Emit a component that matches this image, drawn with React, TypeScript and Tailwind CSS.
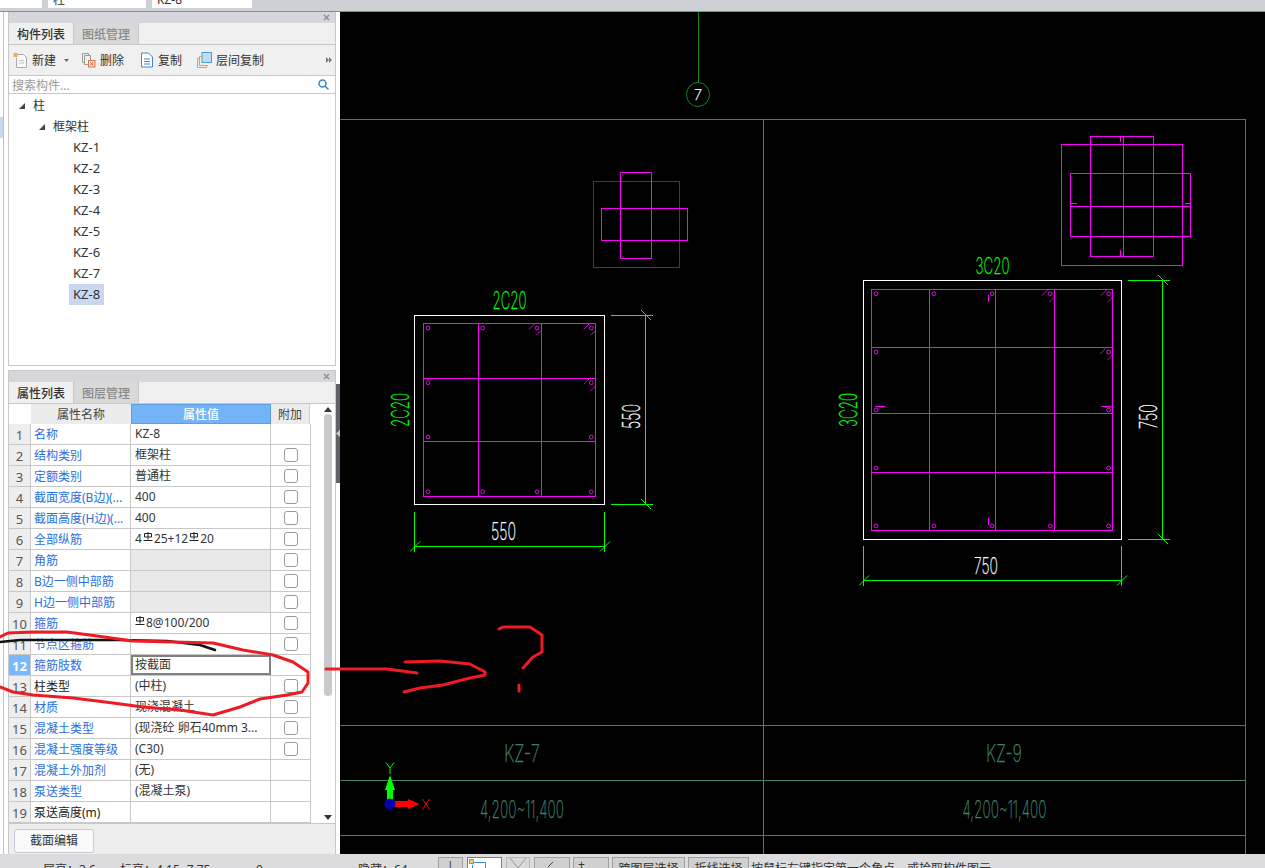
const font = { fontFamily: '"Noto Sans", "Noto Sans CJK SC", sans-serif' };

const treeItems = ["KZ-1", "KZ-2", "KZ-3", "KZ-4", "KZ-5", "KZ-6", "KZ-7", "KZ-8"];

type Row = {
  name: string;
  value?: string;
  black?: boolean;
  gray?: boolean;
  check?: boolean;
  steel?: "all" | "stirrup";
};

const rows: Row[] = [
  { name: "名称", value: "KZ-8" },
  { name: "结构类别", value: "框架柱", check: true },
  { name: "定额类别", value: "普通柱", check: true },
  { name: "截面宽度(B边)(...", value: "400", check: true },
  { name: "截面高度(H边)(...", value: "400", check: true },
  { name: "全部纵筋", steel: "all", check: true },
  { name: "角筋", gray: true, check: true },
  { name: "B边一侧中部筋", gray: true, check: true },
  { name: "H边一侧中部筋", gray: true, check: true },
  { name: "箍筋", steel: "stirrup", check: true },
  { name: "节点区箍筋", check: true },
  { name: "箍筋肢数", value: "按截面" },
  { name: "柱类型", value: "(中柱)", black: true, check: true },
  { name: "材质", value: "现浇混凝土", check: true },
  { name: "混凝土类型", value: "(现浇砼 卵石40mm 3...", check: true },
  { name: "混凝土强度等级", value: "(C30)", check: true },
  { name: "混凝土外加剂", value: "(无)" },
  { name: "泵送类型", value: "(混凝土泵)" },
  { name: "泵送高度(m)", black: true },
];

function SteelMark() {
  return (
    <svg width="10" height="10" viewBox="0 0 10 10" className="mb-[4px] shrink-0" fill="none" stroke="#222" strokeWidth="1">
      <path d="M1.5 1.5H8.5V5H1.5ZM5 0V7.5M0.5 8.5H9.5" />
    </svg>
  );
}

function PanelHeader({ tabs }: { tabs: string[] }) {
  return (
    <>
      <div className="flex h-[11px] items-center justify-end bg-[#d6d6db] pr-[5px]">
        <svg width="7" height="7" viewBox="0 0 7 7" stroke="#8f8f94" strokeWidth="1.5">
          <path d="M1 1L6 6M6 1L1 6" />
        </svg>
      </div>
      <div className="flex h-[22px] border-b border-[#c8c8c8] bg-[#f0f0f0] text-xs leading-[23px]">
        <div className="w-[65px] border-r border-[#c8c8c8] text-center font-medium text-[#333]">{tabs[0]}</div>
        <div className="w-[65px] border-r border-[#c8c8c8] bg-[#d9d9d9] text-center font-medium text-[#8a8a8a]">{tabs[1]}</div>
      </div>
    </>
  );
}

function Toolbar() {
  return (
    <div className="flex h-[31px] items-center border-b border-[#c8c8c8] bg-[#f0f0f0] pl-[4px] pr-[3px] text-xs text-[#333]">
      <svg width="15" height="17" viewBox="0 0 15 17" fill="none" className="mr-[4px]">
        <path d="M4.5 2.5H10.5L13.5 5.5V15.5H3.5V6" stroke="#a8a8a8" fill="#fafafa" />
        <path d="M6 8.5H11M6 11H11" stroke="#c4c4c4" />
        <rect x="0.5" y="1" width="4" height="4" fill="#f2a94e" />
      </svg>
      <span className="pt-[2px]">新建</span>
      <svg width="5" height="3" viewBox="0 0 5 3" className="ml-[8px] mr-[12px]">
        <path d="M0 0H5L2.5 3Z" fill="#666" />
      </svg>
      <svg width="15" height="16" viewBox="0 0 15 16" fill="none" className="mr-[4px]">
        <path d="M1.5 1.5H7.5V3M1.5 1.5V10.5H3" stroke="#9a9a9a" />
        <path d="M3.5 3.5H9.5V8M3.5 3.5V12.5H7" stroke="#9a9a9a" />
        <rect x="7.5" y="8.5" width="6.5" height="6.5" fill="#f6e3d6" stroke="#d0764a" />
        <path d="M9.2 10.2L12.3 13.3M12.3 10.2L9.2 13.3" stroke="#c9552a" />
      </svg>
      <span className="pt-[2px]">删除</span>
      <svg width="14" height="16" viewBox="0 0 14 16" fill="none" className="ml-[16px] mr-[4px]">
        <path d="M1.5 1H8.5L12.5 5V15H1.5Z" fill="#fff" stroke="#3a8ad6" />
        <path d="M4 7H10M4 9.5H10M4 12H10" stroke="#3a8ad6" />
      </svg>
      <span className="pt-[2px]">复制</span>
      <svg width="15" height="16" viewBox="0 0 15 16" fill="none" className="ml-[15px] mr-[4px]">
        <path d="M0.5 15.5V6.5H2.5M0.5 15.5H9.5V13.5" stroke="#e09a55" />
        <path d="M2.5 13.5V4.5H4.5M2.5 13.5H11" stroke="#e09a55" />
        <rect x="5" y="0.5" width="9.5" height="10" fill="#b9def6" stroke="#4d9ed6" />
      </svg>
      <span className="pt-[2px]">层间复制</span>
      <svg width="6" height="6" viewBox="0 0 6 6" className="ml-auto" fill="#777">
        <path d="M0 0L3 3L0 6ZM3 0L6 3L3 6Z" />
      </svg>
    </div>
  );
}

function ComponentPanel() {
  return (
    <section className="flex h-[354px] flex-col border-x border-b border-[#c8c8c8]">
      <PanelHeader tabs={["构件列表", "图纸管理"]} />
      <Toolbar />
      <div className="flex h-[18px] items-center justify-between border-b border-[#c8c8c8] bg-white pl-[3px] pr-[6px] text-xs text-[#9a9a9a]">
        <span className="pt-[2px]">搜索构件...</span>
        <svg width="11" height="11" viewBox="0 0 11 11" fill="none" stroke="#3a86c8" strokeWidth="1.5">
          <circle cx="4.5" cy="4.5" r="3.5" />
          <path d="M7 7L10.5 10.5" />
        </svg>
      </div>
      <div className="flex-1 bg-white pt-[1px] text-xs text-[#333]">
        <div className="flex h-[21px] items-center pl-[10px]">
          <svg width="6" height="6" viewBox="0 0 6 6" className="mr-[8px]"><path d="M6 0V6H0Z" fill="#444" /></svg>
          <span>柱</span>
        </div>
        <div className="flex h-[21px] items-center pl-[30px]">
          <svg width="6" height="6" viewBox="0 0 6 6" className="mr-[8px]"><path d="M6 0V6H0Z" fill="#444" /></svg>
          <span>框架柱</span>
        </div>
        {treeItems.map((item) => (
          <div key={item} className="flex h-[21px] items-center pl-[60px]">
            <span className={`px-[4px] text-[13px] leading-[21px] ${item === "KZ-8" ? "bg-[#c9d8f0]" : ""}`}>{item}</span>
          </div>
        ))}
      </div>
    </section>
  );
}

function PropertyPanel() {
  return (
    <section className="flex h-[484px] flex-col border-x border-t border-[#c8c8c8]">
      <PanelHeader tabs={["属性列表", "图层管理"]} />
      <div className="flex h-[419px] bg-white text-xs">
        <div className="w-[313px]">
          <div className="flex h-[20px] pr-[11px] text-[#444]">
            <div className="w-[22px] bg-white" />
            <div className="w-[100px] bg-[#ececec] text-center leading-[22px]">属性名称</div>
            <div className="w-[140px] border border-[#5a9fe6] bg-[#74b3f5] text-center font-medium leading-[20px] text-white">属性值</div>
            <div className="w-[39px] border-r border-[#d0d0d0] bg-[#ececec] text-center leading-[22px]">附加</div>
            <div className="flex-1 bg-[#ececec]" />
          </div>
          {rows.map((row, i) => {
            const active = i === 11;
            return (
              <div key={row.name} className="flex h-[21px] w-[302px] border-b border-[#c8c8c8] leading-[22px]">
                <div className={`w-[22px] shrink-0 border-r border-[#c8c8c8] text-center text-[13px] ${active ? "bg-[#7ab8fb] font-bold text-white" : "bg-[#eeeeee] text-[#555]"}`}>
                  {i + 1}
                </div>
                <div className={`w-[100px] shrink-0 overflow-hidden whitespace-nowrap border-r border-[#c8c8c8] pl-[3px] ${row.black ? "text-[#222]" : "text-[#2a6fdc]"}`}>
                  {row.name}
                </div>
                <div className={`flex w-[140px] shrink-0 items-center gap-[1px] whitespace-nowrap text-[#333] ${active ? "border-2 border-[#808080] pl-[2px]" : "border-r border-[#c8c8c8] pl-[4px]"} ${row.gray ? "bg-[#e9e9e9]" : ""}`}>
                  {row.steel === "all" && (
                    <>
                      4<SteelMark />25+12<SteelMark />20
                    </>
                  )}
                  {row.steel === "stirrup" && (
                    <>
                      <SteelMark />8@100/200
                    </>
                  )}
                  {row.value}
                </div>
                <div className="flex w-[40px] shrink-0 items-center justify-center border-r border-[#c8c8c8]">
                  {row.check && <div className="h-[14px] w-[14px] rounded-[3px] border border-[#9a9a9a] bg-white" />}
                </div>
              </div>
            );
          })}
        </div>
        <div className="flex w-[14px] flex-col items-center justify-between pb-[3px] pt-[3px]">
          <svg width="8" height="5" viewBox="0 0 8 5"><path d="M4 0L8 5H0Z" fill="#333" /></svg>
          <div className="h-[282px] w-[8px] rounded-full bg-[#c9c9c9]" />
          <div className="h-[115px]" />
          <svg width="8" height="5" viewBox="0 0 8 5"><path d="M0 0H8L4 5Z" fill="#333" /></svg>
        </div>
      </div>
      <div className="flex-1 border-t border-[#c8c8c8] bg-[#eeeeee] pl-[5px] pt-[3px]">
        <button className="h-[24px] w-[80px] rounded-[3px] border border-[#c5cbd8] bg-[#fafafa] text-xs text-[#333]">截面编辑</button>
      </div>
    </section>
  );
}

type CadTextProps = {
  x: number;
  y: number;
  w: number;
  h: number;
  color: string;
  rotate?: boolean;
  children: string;
};

// CAD lettering: narrow, thin, sits on a baseline at x/y
function CadText({ x, y, w, h, color, rotate, children }: CadTextProps) {
  return (
    <text
      x={x}
      y={y}
      fontFamily="Inter, sans-serif"
      fontWeight="200"
      fontSize={h / 0.727}
      textLength={w}
      lengthAdjust="spacingAndGlyphs"
      fill={color}
      stroke={color}
      strokeWidth="0.25"
      transform={rotate ? `rotate(-90 ${x} ${y})` : undefined}
    >
      {children}
    </text>
  );
}

function Rebar({ points }: { points: number[][] }) {
  return (
    <>
      {points.map(([x, y]) => (
        <circle key={`${x}-${y}`} cx={x} cy={y} r="1.9" fill="none" stroke="#ff00ff" strokeWidth="0.9" />
      ))}
    </>
  );
}

function Tick({ x, y }: { x: number; y: number }) {
  return <path d={`M${x - 5} ${y - 5}L${x + 5} ${y + 5}`} stroke="#00ff00" strokeWidth="1" />;
}

function Drawing() {
  const teal = "#3f8068";
  const pink = "#ff00ff";
  const lime = "#00ff00";
  return (
    <svg width="925" height="842" viewBox="340 12 925 842" className="block" fill="none">
      <g stroke={teal} shapeRendering="crispEdges">
        <path d="M340 119.5H1245.5V854M763.5 119.5V854M340 725.5H1245.5M340 780.5H1245.5M340 835.5H1245.5" />
      </g>
      <path d="M698.5 12V83" stroke="#0d8a1e" shapeRendering="crispEdges" />
      <ellipse cx="698" cy="94.5" rx="11.5" ry="12" stroke="#0d8a1e" />
      <CadText x={694} y={100} w={8} h={11} color="#ffffff">7</CadText>

      {/* small section, left */}
      <g stroke={pink} shapeRendering="crispEdges">
        <rect x="593.5" y="181.5" width="86" height="86" strokeOpacity="0.6" />
        <rect x="620.5" y="172.5" width="31" height="86" />
        <rect x="601.5" y="208.5" width="86" height="32" />
      </g>

      {/* small section, right */}
      <g stroke={pink} shapeRendering="crispEdges">
        <rect x="1061.5" y="144.5" width="121" height="121" />
        <rect x="1090.5" y="136.5" width="63" height="120" />
        <rect x="1070.5" y="173.5" width="120" height="63" />
        <path d="M1123.5 136V256M1070 206.5H1190M1120.5 137V142M1120.5 250V256M1071 203.5H1077M1185 203.5H1190" />
      </g>

      {/* KZ-7 section */}
      <rect x="414.5" y="315.5" width="190" height="189" stroke="#ffffff" strokeWidth="1.2" shapeRendering="crispEdges" />
      <g stroke={pink} shapeRendering="crispEdges">
        <rect x="423.5" y="323.5" width="172" height="173" />
        <path d="M478.5 323V496M541.5 323V496M423 378.5H596M423 441.5H596" />
      </g>
      <Rebar
        points={[
          [428, 328], [482.7, 328], [537, 328], [591.3, 328],
          [428, 382.7], [591.3, 382.7],
          [428, 437], [591.3, 437],
          [428, 491.7], [482.7, 491.7], [537, 491.7], [591.3, 491.7],
        ]}
      />
      <path d="M529 329.5L534.5 324M536 335L541 331M583.5 329.5L589 324M590.5 335L595.5 331M584 384L589.5 378.5M590.5 391L595.5 386" stroke={pink} strokeWidth="0.8" />
      <g stroke={lime}>
        <path d="M611 315.5H653M611 504.5H653M645.5 315V505M414.5 512V552M604.5 512V552M414 546.5H605" shapeRendering="crispEdges" />
        <Tick x={646} y={315} />
        <Tick x={646} y={504} />
        <path d="M410 551.5L420 541.5M600 551.5L610 541.5" />
      </g>
      <CadText x={492.5} y={309} w={34} h={18} color={lime}>2C20</CadText>
      <CadText x={409} y={427} w={34} h={18} color={lime} rotate>2C20</CadText>
      <CadText x={491} y={540} w={25} h={18} color="#ffffff">550</CadText>
      <CadText x={640} y={429} w={25} h={18} color="#ffffff" rotate>550</CadText>

      {/* KZ-9 section */}
      <rect x="863.5" y="280.5" width="258" height="259" stroke="#ffffff" strokeWidth="1.2" shapeRendering="crispEdges" />
      <g stroke={pink} shapeRendering="crispEdges">
        <rect x="871.5" y="289.5" width="241" height="241" />
        <path d="M929.5 289V530M995.5 289V530M1054.5 289V530M871 347.5H1113M871 413.5H1113M871 472.5H1113" />
        <path d="M988.5 295V302M988.5 518V525M875 406.5H885M1101 406.5H1111" />
      </g>
      <Rebar
        points={[
          [876, 293.7], [934, 293.7], [992, 293.7], [1050.3, 293.7], [1108.7, 293.7],
          [876, 352], [1108.7, 352],
          [876, 410], [1108.7, 410],
          [876, 468], [1108.7, 468],
          [876, 526], [934, 526], [992, 526], [1050.3, 526], [1108.7, 526],
        ]}
      />
      <path d="M1042 295.5L1047.5 290M1049.5 302L1054 297.5M1101 295.5L1106.5 290M1107.5 302L1112.5 297.5M1100 354L1105.5 348.5M1107.5 360L1112.5 355" stroke={pink} strokeWidth="0.8" />
      <g stroke={lime}>
        <path d="M1128 280.5H1170M1128 539.5H1170M1162.5 280V540M863.5 546V586M1121.5 546V586M863 580.5H1122" shapeRendering="crispEdges" />
        <Tick x={1163} y={280} />
        <Tick x={1163} y={539} />
        <path d="M859 585.5L869 575.5M1117 585.5L1127 575.5" />
      </g>
      <CadText x={975.5} y={274} w={34} h={17} color={lime}>3C20</CadText>
      <CadText x={857} y={427} w={34} h={18} color={lime} rotate>3C20</CadText>
      <CadText x={974} y={574} w={24} h={17} color="#ffffff">750</CadText>
      <CadText x={1157} y={429} w={25} h={18} color="#ffffff" rotate>750</CadText>

      {/* title block */}
      <CadText x={504} y={762} w={36} h={18} color={teal}>KZ-7</CadText>
      <CadText x={986} y={762} w={36} h={18} color={teal}>KZ-9</CadText>
      <CadText x={480} y={817.5} w={84} h={17.5} color={teal}>4,200~11,400</CadText>
      <CadText x={962.5} y={817.5} w={84} h={17.5} color={teal}>4,200~11,400</CadText>

      {/* axis gizmo */}
      <rect x="387" y="786" width="6" height="16" fill={lime} />
      <path d="M390 775L395 790H385Z" fill={lime} />
      <rect x="394" y="801" width="15" height="6" fill="#ff0000" />
      <path d="M419.5 804L408 799V809Z" fill="#ff0000" />
      <circle cx="390" cy="804" r="5.5" fill="#0000b0" />
      <path d="M386 762.5L390 768V774M394 762.5L390 768" stroke={lime} />
      <path d="M422.5 799L429.5 809.5M429.5 799L422.5 809.5" stroke="#ff0000" />
    </svg>
  );
}

function Scribbles() {
  return (
    <svg width="1265" height="868" viewBox="0 0 1265 868" className="pointer-events-none absolute left-0 top-0" fill="none" strokeLinecap="round" strokeLinejoin="round">
      <path d="M0 642L20 640H117L167 641L200 645L215 650" stroke="#111" strokeWidth="2.5" />
      <path
        d="M0 637L8 633L33 632L67 632L97 636L133 641L173 642L213 643L243 650L273 655L293 662L308 672L308 683L302 692L287 695L260 699L240 707L213 715L180 710L143 707L113 703L73 698L33 695L13 692L0 687"
        stroke="#ed1c24"
        strokeWidth="3"
      />
      <path d="M326 669H387L417 673" stroke="#ed1c24" strokeWidth="3" />
      <path d="M405 662L440 661L470 664L485 672V675L470 678L443 685L420 688L404 692" stroke="#ed1c24" strokeWidth="3" />
      <path d="M499 629L503 627H530L542 635V652L533 657L523 668" stroke="#ed1c24" strokeWidth="3" />
      <path d="M519 685V691" stroke="#ed1c24" strokeWidth="3" />
    </svg>
  );
}

function StatusBar() {
  return (
    <footer className="relative flex h-[14px] shrink-0 overflow-hidden bg-[#dcdcdf] text-xs text-[#333]">
      <div className="flex w-[438px] shrink-0 pt-[8px] leading-[16px]">
        <span className="ml-[43px] w-[77px]">层高：3.6</span>
        <span className="w-[136px]">标高：4.15~7.75</span>
        <span className="w-[102px]">0</span>
        <span>隐藏：64</span>
      </div>
      <div className="flex gap-[3px] pt-[3px]">
        <div className="h-[24px] w-[25px] border border-[#a0a0a0] bg-[#d0d0d0] pl-[8px] leading-[18px]">|</div>
        <div className="ml-[1px] h-[24px] w-[35px] border border-[#3a8ee6] bg-white">
          <svg width="33" height="11" viewBox="0 0 33 11" fill="none">
            <path d="M4.5 4.5H17.5V11" stroke="#3a8ee6" />
            <path d="M4.5 7V11" stroke="#3a8ee6" />
            <rect x="1.5" y="1.5" width="4" height="4" fill="#f5c27a" stroke="#d08a30" />
          </svg>
        </div>
        <div className="ml-[1px] h-[24px] w-[24px] border border-[#b8b8b8] bg-[#d8d8d8]">
          <svg width="22" height="11" viewBox="0 0 22 11" stroke="#999"><path d="M3 0L11 10L19 0" fill="none" /></svg>
        </div>
        <div className="ml-[1px] h-[24px] w-[36px] border border-[#a0a0a0] bg-[#d0d0d0]">
          <svg width="34" height="11" viewBox="0 0 34 11" stroke="#444"><path d="M13 9L18 4" fill="none" /></svg>
        </div>
        <div className="h-[24px] w-[36px] border border-[#a0a0a0] bg-[#d0d0d0] pl-[4px] leading-[14px]">+</div>
        <div className="h-[24px] w-[73px] border border-[#a0a0a0] bg-[#d0d0d0] text-center leading-[22px]">跨图层选择</div>
        <div className="h-[24px] w-[61px] border border-[#a0a0a0] bg-[#d0d0d0] text-center leading-[22px]">折线选择</div>
      </div>
      <span className="ml-[2px] pt-[7px] leading-[16px]">按鼠标左键指定第一个角点，或拾取构件图元</span>
    </footer>
  );
}

export default function App() {
  return (
    <div className="relative flex h-[868px] w-[1265px] flex-col overflow-hidden bg-white" style={font}>
      <header className="flex h-[12px] shrink-0 gap-[6px] border-b border-[#8a8d91] bg-[#cdd0d4] text-xs text-[#333]">
        <div className="h-[8px] w-[42px] bg-white" />
        <div className="h-[8px] w-[98px] overflow-hidden bg-white pl-[5px] leading-[0px]">柱</div>
        <div className="h-[8px] w-[100px] overflow-hidden bg-white pl-[5px] leading-[0px]">KZ-8</div>
      </header>
      <div className="flex min-h-0 flex-1">
        <aside className="flex w-[340px] shrink-0">
          <div className="flex w-[8px] shrink-0">
            <div className="w-[3px]">
              <div className="mt-[105px] h-[21px] bg-[#c9d8f0]" />
            </div>
            <div className="w-px bg-[#c0c0c0]" />
          </div>
          <div className="flex w-[328px] shrink-0 flex-col gap-[4px]">
            <ComponentPanel />
            <PropertyPanel />
          </div>
          <div className="w-[4px] shrink-0 pt-[372px]">
            <div className="flex h-[99px] items-center justify-center bg-[#5f6368]">
              <svg width="4" height="7" viewBox="0 0 4 7"><path d="M4 0V7L0 3.5Z" fill="#c9c9c9" /></svg>
            </div>
          </div>
        </aside>
        <main className="flex-1 bg-black">
          <Drawing />
        </main>
      </div>
      <StatusBar />
      <Scribbles />
    </div>
  );
}
